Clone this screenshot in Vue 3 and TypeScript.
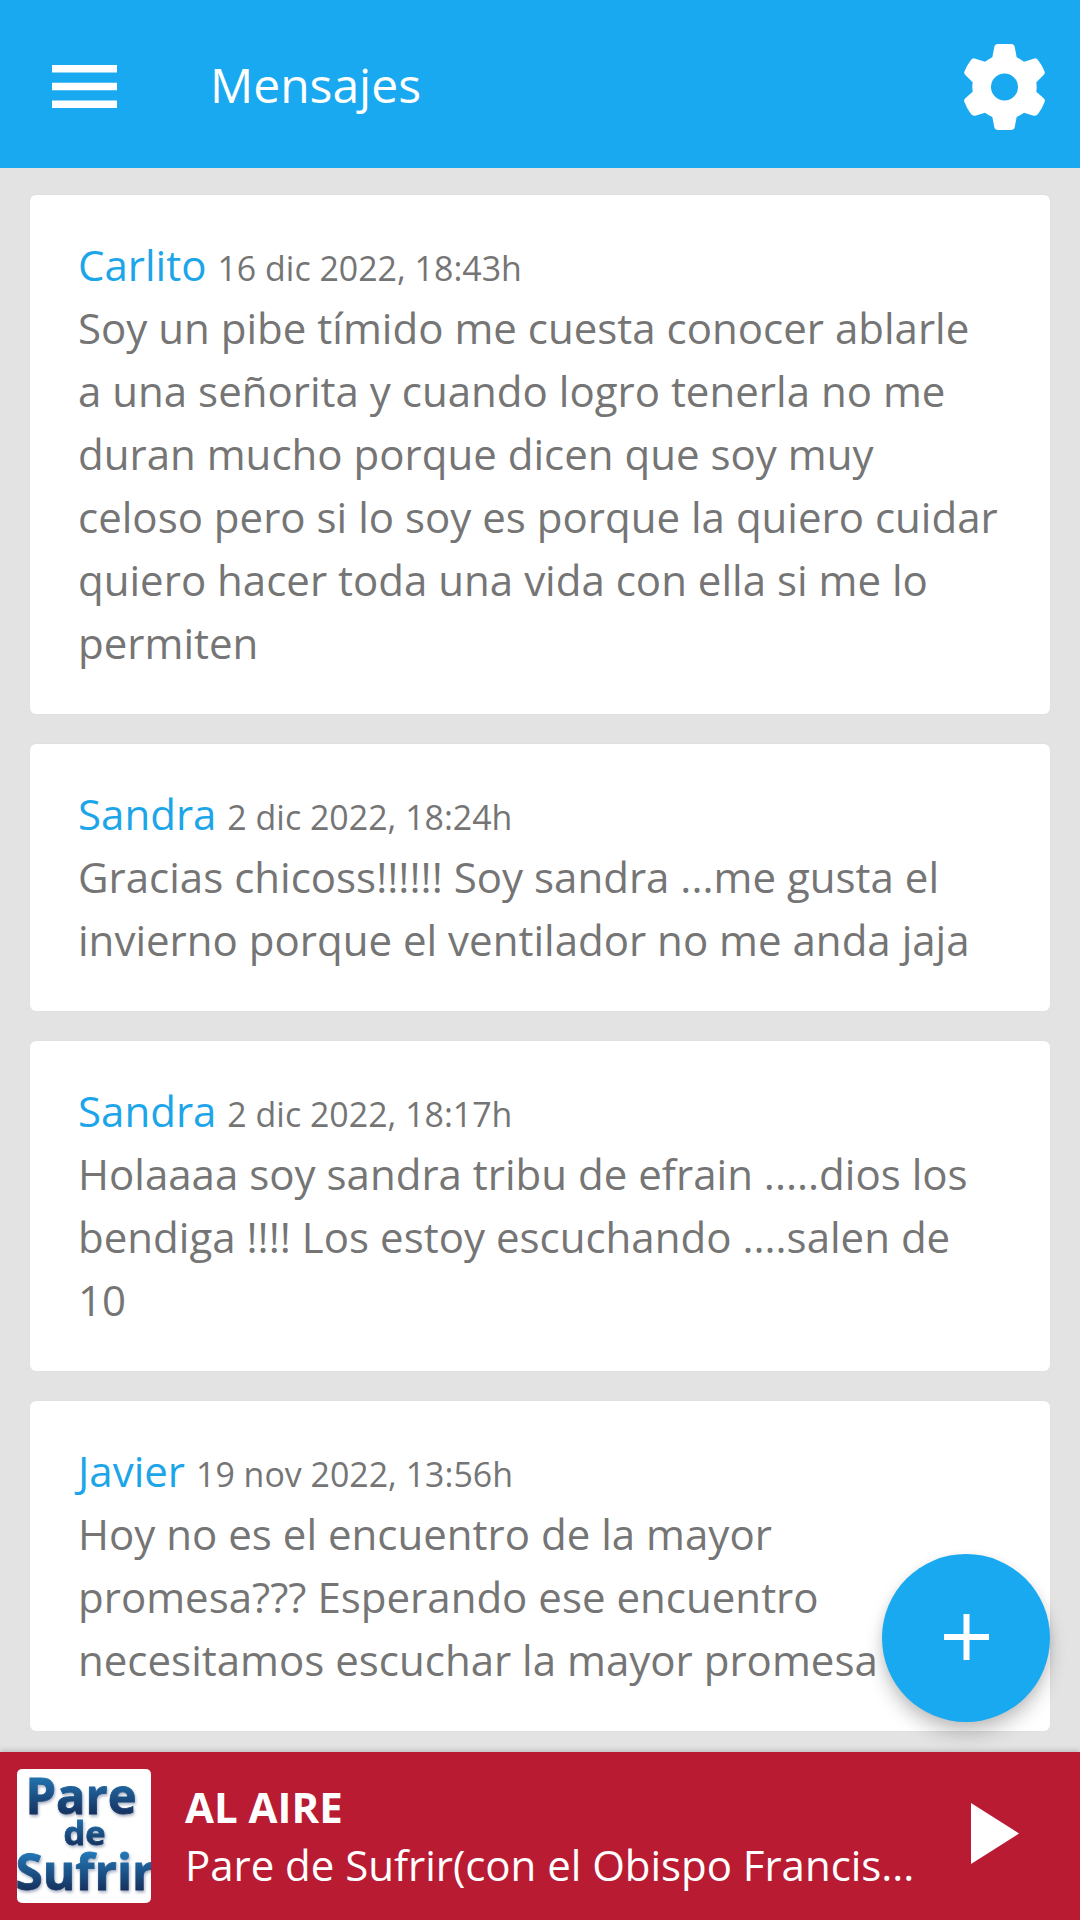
<script setup lang="ts">
interface Message {
  id: number
  author: string
  date: string
  lines: string[]
}

const messages: Message[] = [
  {
    id: 1,
    author: 'Carlito',
    date: '16 dic 2022, 18:43h',
    lines: [
      'Soy un pibe tímido me cuesta conocer ablarle',
      'a una señorita y cuando logro tenerla no me',
      'duran mucho porque dicen que soy muy',
      'celoso pero si lo soy es porque la quiero cuidar',
      'quiero hacer toda una vida con ella si me lo',
      'permiten',
    ],
  },
  {
    id: 2,
    author: 'Sandra',
    date: '2 dic 2022, 18:24h',
    lines: ['Gracias chicoss!!!!!! Soy sandra ...me gusta el', 'invierno porque el ventilador no me anda jaja'],
  },
  {
    id: 3,
    author: 'Sandra',
    date: '2 dic 2022, 18:17h',
    lines: ['Holaaaa soy sandra tribu de efrain .....dios los', 'bendiga !!!! Los estoy escuchando ....salen de', '10'],
  },
  {
    id: 4,
    author: 'Javier',
    date: '19 nov 2022, 13:56h',
    lines: ['Hoy no es el encuentro de la mayor', 'promesa??? Esperando ese encuentro', 'necesitamos escuchar la mayor promesa'],
  },
]
</script>

<template>
  <div class="screen">
    <header class="toolbar">
      <svg class="menu" viewBox="0 0 65 43" aria-label="Menú">
        <path d="M0 0h65v7.4H0zM0 17.8h65v7.4H0zM0 35.6h65V43H0z" />
      </svg>
      <h1 class="title">Mensajes</h1>
      <svg class="gear" viewBox="134 131 243 258" aria-label="Ajustes">
        <path
          fill-rule="evenodd"
          d="M236 131H275Q284 131 286 139L292 171Q304 177 314 184L343 175Q351 172 356 179Q369 196 376 214Q378 219 373 224L351 246Q353 260 351 274L373 294Q378 298 376 304Q369 324 356 341Q351 348 343 346L314 337Q304 344 292 350L286 381Q284 389 275 389H236Q227 389 225 381L219 350Q207 344 197 337L168 346Q160 348 155 341Q142 324 135 304Q133 298 138 294L160 274Q158 260 160 246L138 224Q133 219 135 214Q142 196 155 179Q160 172 168 175L197 184Q207 177 219 171L225 139Q227 131 236 131ZM255.500 219.500A40.500 40.500 0 1 0 255.500 300.500A40.500 40.500 0 1 0 255.500 219.500Z"
        />
      </svg>
    </header>

    <main class="feed">
      <article v-for="m in messages" :key="m.id" class="card">
        <div class="row">
          <span class="author">{{ m.author }}</span> <span class="date">{{ m.date }}</span>
        </div>
        <div v-for="(line, i) in m.lines" :key="i" class="row">{{ line }}</div>
      </article>
      <button class="fab" aria-label="Nuevo mensaje">
        <svg viewBox="0 0 45 46"><path d="M19.500 0h6v20h19.500v6H25.500v20h-6V26H0v-6h19.500z" /></svg>
      </button>
    </main>

    <footer class="player">
      <svg class="cover" viewBox="0 0 134 134">
        <defs>
          <linearGradient id="ink1" gradientUnits="userSpaceOnUse" x1="0" y1="8" x2="0" y2="46">
            <stop offset="0" stop-color="#2273b0" />
            <stop offset="1" stop-color="#15305c" />
          </linearGradient>
          <linearGradient id="ink2" gradientUnits="userSpaceOnUse" x1="0" y1="50" x2="0" y2="78">
            <stop offset="0" stop-color="#2070ac" />
            <stop offset="1" stop-color="#15305c" />
          </linearGradient>
          <linearGradient id="ink3" gradientUnits="userSpaceOnUse" x1="0" y1="82" x2="0" y2="122">
            <stop offset="0" stop-color="#247bbb" />
            <stop offset="1" stop-color="#15305c" />
          </linearGradient>
        </defs>
        <g class="logo">
          <text x="8.500" y="45" font-size="51" textLength="111" lengthAdjust="spacingAndGlyphs" fill="url(#ink1)" stroke="url(#ink1)">Pare</text>
          <text x="46.500" y="76" font-size="33" textLength="42" lengthAdjust="spacingAndGlyphs" fill="url(#ink2)" stroke="url(#ink2)">de</text>
          <text x="-1.500" y="120.500" font-size="50" textLength="139" lengthAdjust="spacingAndGlyphs" fill="url(#ink3)" stroke="url(#ink3)">Sufrir</text>
        </g>
      </svg>
      <div class="track">
        <strong>AL AIRE</strong>
        <span>Pare de Sufrir(con el Obispo Francis...</span>
      </div>
      <svg class="play" viewBox="0 0 48 61" aria-label="Reproducir"><path d="M0 0L48 30.500L0 61z" /></svg>
    </footer>
  </div>
</template>

<style>
body {
  margin: 0;
}
</style>

<style scoped>
.screen {
  width: 1080px;
  height: 1920px;
  display: flex;
  flex-direction: column;
  overflow: hidden;
  background: #e3e3e3;
  font-family: 'Open Sans', 'Noto Sans', sans-serif;
}
.toolbar {
  flex: none;
  box-sizing: border-box;
  height: 168px;
  padding: 0 35px 0 52px;
  display: flex;
  align-items: center;
  background: #18a9f1;
  color: #fff;
}
.toolbar svg,
.play,
.fab svg {
  display: block;
  fill: #fff;
}
.menu {
  width: 65px;
  height: 43px;
  margin-top: 5px;
}
.title {
  flex: 1;
  margin: 2px 0 0 93px;
  font-size: 48px;
  line-height: 64px;
  font-weight: 400;
}
.gear {
  width: 81px;
  height: 86px;
  margin-top: 5px;
}
.feed {
  position: relative;
  flex: 1;
  min-height: 0;
  box-sizing: border-box;
  padding: 27px 30px 0;
  display: flex;
  flex-direction: column;
  gap: 30px;
}
.card {
  flex: none;
  padding: 38px 0 40px 48px;
  border-radius: 6px;
  background: #fff;
  box-shadow: 0 0 2px rgba(0, 0, 0, 0.05);
  color: #757575;
  font-size: 42px;
  line-height: 63px;
  letter-spacing: 0.015px;
}
.row {
  height: 63px;
  white-space: nowrap;
}
.author {
  color: #1da5ea;
}
.date {
  font-size: 33.9px;
}
.fab {
  position: absolute;
  right: 30px;
  bottom: 30px;
  width: 168px;
  height: 168px;
  padding: 0;
  border: 0;
  border-radius: 50%;
  display: flex;
  align-items: center;
  justify-content: center;
  background: #18a9f1;
  box-shadow: 0 12px 18px rgba(0, 0, 0, 0.2), 0 2px 10px rgba(0, 0, 0, 0.08);
}
.fab svg {
  width: 45px;
  height: 46px;
  margin-bottom: 2px;
}
.player {
  position: relative;
  flex: none;
  box-sizing: border-box;
  height: 168px;
  padding: 0 61px 0 17px;
  display: flex;
  align-items: center;
  background: #b91b33;
  box-shadow: 0 -1px 6px rgba(0, 0, 0, 0.2);
  color: #fff;
}
.cover {
  width: 134px;
  height: 134px;
  border-radius: 5px;
  background: #fff;
  overflow: hidden;
}
.logo {
  font-family: 'Open Sans', 'Noto Sans', sans-serif;
  font-weight: 700;
  stroke-width: 0.8px;
  filter: drop-shadow(1px 2px 1.500px rgba(60, 80, 120, 0.45));
}
.track {
  flex: 1;
  margin-left: 34px;
  display: flex;
  flex-direction: column;
  font-size: 42px;
  line-height: 58px;
  white-space: nowrap;
}
.track strong {
  font-weight: 700;
}
.track span {
  letter-spacing: -0.03px;
}
.play {
  width: 48px;
  height: 61px;
  margin-bottom: 5px;
}
</style>
